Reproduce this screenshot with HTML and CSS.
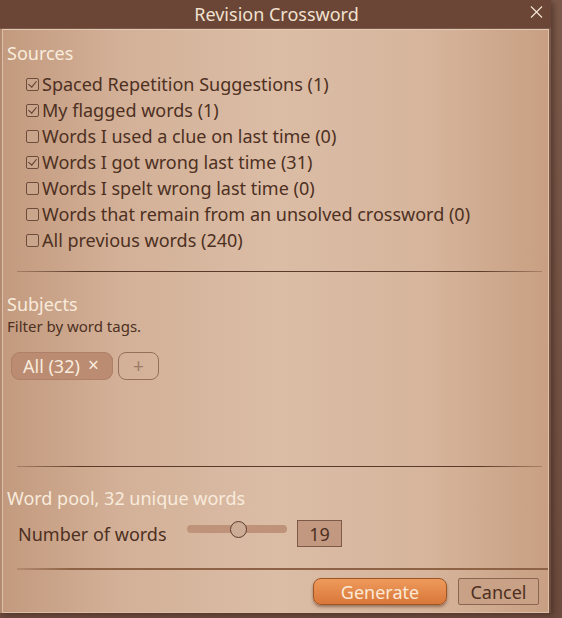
FILE: index.html
```html
<!DOCTYPE html>
<html>
<head>
<meta charset="utf-8">
<link rel="stylesheet" href="styles.css">
</head>
<body>
<div class="window">
  <div class="titlebar">
    <span class="title">Revision Crossword</span>
    <svg class="close" width="13" height="12" viewBox="0 0 13 12"><path d="M1 0.5L12 11.5M12 0.5L1 11.5" stroke="#f3e3d2" stroke-width="1.2" fill="none"/></svg>
  </div>
  <div class="body">
    <section class="sources">
      <h2 class="heading">Sources</h2>
      <ul class="checks">
        <li><span class="box on"></span>Spaced Repetition Suggestions (1)</li>
        <li><span class="box on"></span>My flagged words (1)</li>
        <li><span class="box"></span>Words I used a clue on last time (0)</li>
        <li><span class="box on"></span>Words I got wrong last time (31)</li>
        <li><span class="box"></span>Words I spelt wrong last time (0)</li>
        <li><span class="box"></span>Words that remain from an unsolved crossword (0)</li>
        <li><span class="box"></span>All previous words (240)</li>
      </ul>
    </section>
    <hr class="sep sep1">
    <section class="subjects">
      <h2 class="heading">Subjects</h2>
      <p class="hint">Filter by word tags.</p>
      <div class="chips">
        <span class="chip">All (32)<span class="x">×</span></span>
        <span class="add">+</span>
      </div>
    </section>
    <hr class="sep sep2">
    <section class="pool">
      <h2 class="heading">Word pool, 32 unique words</h2>
      <div class="numrow">
        <span class="numlabel">Number of words</span>
        <span class="slider"><span class="thumb"></span></span>
        <span class="value">19</span>
      </div>
    </section>
    <hr class="sep sep3">
    <div class="buttons">
      <button class="btn primary">Generate</button>
      <button class="btn cancel">Cancel</button>
    </div>
  </div>
</div>
</body>
</html>
```
FILE: styles.css
```css
html, body {
  margin: 0;
  padding: 0;
}
body {
  width: 562px;
  height: 618px;
  background: linear-gradient(to bottom, #7c5a4b 0, #6d4c3e 100%);
  font-family: "Noto Sans", "Open Sans", sans-serif;
  overflow: hidden;
}
.window {
  width: 551px;
  height: 613px;
  display: flex;
  flex-direction: column;
  box-shadow: 3px 2px 6px rgba(60, 35, 25, 0.55);
}
.titlebar {
  height: 28px;
  background: #6b4535;
  display: flex;
  align-items: center;
  justify-content: center;
  position: relative;
}
.title {
  color: #f1e2d0;
  font-size: 18px;
  margin-left: 2px;
}
.close {
  position: absolute;
  right: 8px;
  top: 6px;
}
.body {
  flex: 1;
  background: linear-gradient(to right, #c39a7e 0%, #d3b198 22%, #dbbca5 50%, #d6b59c 78%, #c89f82 100%);
  border: 1px solid #ddc0aa;
  border-top-color: #e3c8b2;
  margin: 1px 2px 0 2px;
  padding: 0 0 0 4px;
  display: flex;
  flex-direction: column;
  box-shadow: -2px 0 0 #b38a70;
}
.heading {
  margin: 0;
  font-weight: normal;
  font-size: 18px;
  color: #f8ebdc;
  line-height: 24px;
}
.sources .heading {
  margin-top: 11px;
}
.checks {
  list-style: none;
  margin: 6px 0 0 0;
  padding: 0 0 0 19px;
}
.checks li {
  height: 26px;
  display: flex;
  align-items: center;
  font-size: 18px;
  color: #4d3022;
  white-space: nowrap;
}
.box {
  width: 11px;
  height: 11px;
  border: 1px solid #6e4c3c;
  border-radius: 2px;
  background: #c9a58c;
  margin-right: 3px;
  margin-top: 1px;
  position: relative;
  flex: none;
}
.box.on::after {
  content: "";
  position: absolute;
  left: 3px;
  top: 0px;
  width: 4px;
  height: 7px;
  border-right: 1.3px solid #5a3a2b;
  border-bottom: 1.3px solid #5a3a2b;
  transform: rotate(40deg);
}
.sep {
  border: 0;
  height: 1px;
  margin: 0 6px 0 10px;
  background: linear-gradient(to right, rgba(90,55,35,0.3), #5a3a28 12%, #5a3a28 88%, rgba(90,55,35,0.3));
}
.sep1 { margin-top: 18px; }
.subjects .heading { margin-top: 20px; }
.hint {
  margin: -1px 0 0 0;
  font-size: 15px;
  color: #4d3022;
  line-height: 22px;
}
.chips {
  display: flex;
  gap: 5px;
  margin: 15px 0 0 4px;
}
.chip {
  width: 102px;
  height: 28px;
  padding: 0 0 0 12px;
  border-radius: 9px;
  background: #bb8c72;
  box-shadow: inset 0 0 0 1px #ad8067;
  color: #f8ebdc;
  font-size: 18px;
  display: flex;
  align-items: center;
  box-sizing: border-box;
}
.chip .x {
  margin-left: 8px;
  font-size: 19px;
  margin-top: -3px;
}
.add {
  width: 41px;
  height: 28px;
  border: 1px solid #94705c;
  border-radius: 8px;
  box-sizing: border-box;
  display: flex;
  align-items: center;
  justify-content: center;
  color: #9c7a67;
  font-size: 19px;
}
.sep2 { margin-top: 86px; }
.pool .heading { margin-top: 19px; }
.numrow {
  display: flex;
  align-items: center;
  margin: 10px 0 0 11px;
  height: 27px;
}
.numlabel {
  font-size: 18px;
  color: #4d3022;
  width: 169px;
}
.slider {
  width: 100px;
  height: 8px;
  border-radius: 4px;
  background: #bf927a;
  position: relative;
  margin-top: -9px;
}
.thumb {
  position: absolute;
  left: 43px;
  top: -4px;
  width: 17px;
  height: 17px;
  border-radius: 50%;
  border: 1px solid #5b3b2c;
  background: #cdac96;
  box-sizing: border-box;
}
.value {
  margin-left: 10px;
  width: 45px;
  height: 27px;
  box-sizing: border-box;
  border: 1px solid #7d5a48;
  background: #c39880;
  color: #4d3022;
  font-size: 18px;
  display: flex;
  align-items: center;
  justify-content: center;
}
.sep3 {
  margin-top: 21px;
  margin-right: 0;
  background: linear-gradient(to right, rgba(140,95,65,0.3), #8e6345 10%, #8e6345 100%);
  height: 2px;
}
.buttons {
  display: flex;
  justify-content: flex-end;
  gap: 11px;
  padding: 8px 9px 0 0;
}
.btn {
  font-family: "Noto Sans", "Open Sans", sans-serif;
  font-size: 18px;
  height: 27px;
  box-sizing: border-box;
  padding: 0;
  line-height: 1;
  cursor: default;
}
.primary {
  width: 134px;
  border-radius: 8px;
  border: 1px solid #9e5524;
  background: linear-gradient(to bottom, #ee9a5c, #d9773a);
  color: #fbe9d6;
  box-shadow: 0 2px 3px rgba(90, 50, 25, 0.5);
}
.cancel {
  width: 81px;
  border: 1px solid #8a6552;
  border-radius: 2px;
  background: #c9a186;
  color: #4d3022;
}
```
